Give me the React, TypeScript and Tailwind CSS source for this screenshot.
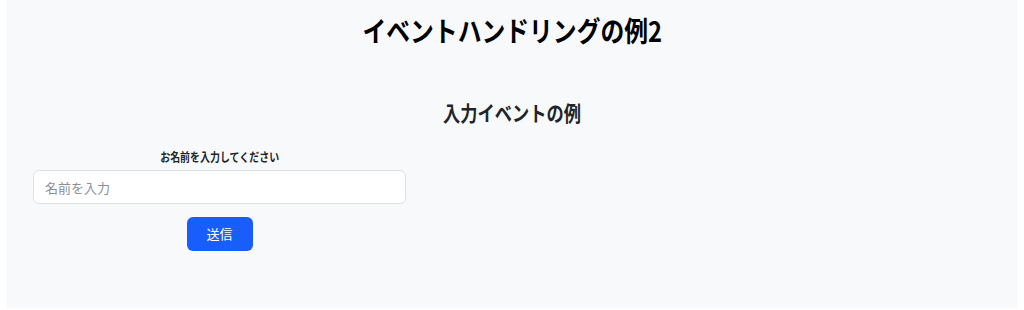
// イベントハンドリングの例 — 入力フォーム
import { useState } from 'react';

const jp = "font-['Noto_Sans_CJK_JP','Noto_Sans',sans-serif]";

export default function App(): JSX.Element {
  const [name, setName] = useState('');

  return (
    <div className={`bg-white h-[310px] ${jp}`}>
      <div className="mx-[7px] h-[308px] bg-[#f8f9fa] text-[#212529]">
        <h1 className="pt-[13px] text-center text-[28px] leading-[34px] font-bold text-black">
          <span className="inline-block scale-x-[0.85]">イベントハンドリングの例2</span>
        </h1>

        <h2 className="mt-[53px] text-center text-[21px] leading-[25px] font-bold">
          <span className="inline-block scale-x-[0.82]">入力イベントの例</span>
        </h2>

        <div className="ml-[26px] mt-[24px] w-[373px] flex flex-col items-center">
          <label htmlFor="name" className="text-[12px] leading-[16px] font-bold">
            <span className="inline-block scale-x-[0.83]">お名前を入力してください</span>
          </label>
          <input
            id="name"
            value={name}
            onChange={(e) => setName(e.target.value)}
            placeholder="名前を入力"
            className="mt-[5px] w-full h-[34px] rounded-md border border-[#dee2e6] bg-white px-[11px] text-[13px] placeholder:text-[#8a8f96] outline-none"
          />
          <button
            type="button"
            className="mt-[13px] w-[66px] h-[34px] rounded-md bg-[#1a5dfd] text-white text-[13px]"
          >
            送信
          </button>
        </div>
      </div>
    </div>
  );
}
